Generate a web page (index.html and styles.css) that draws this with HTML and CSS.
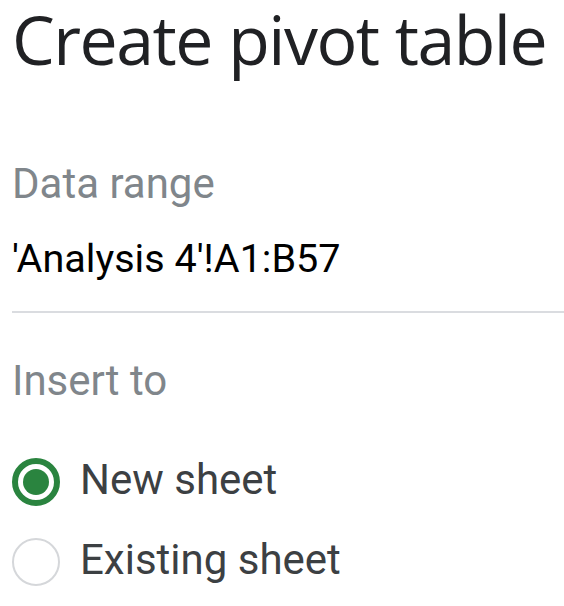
FILE: index.html
```html
<!DOCTYPE html>
<html>
<head>
<meta charset="utf-8">
<link rel="stylesheet" href="styles.css">
</head>
<body>
<div class="dialog">
  <h1 class="title">Create pivot table</h1>
  <div class="label label-range">Data range</div>
  <div class="range-value">'Analysis 4'!A1:B57</div>
  <div class="divider"></div>
  <div class="label label-insert">Insert to</div>
  <div class="options">
    <div class="option">
      <span class="radio radio-checked"><span class="dot"></span></span>
      <span class="option-text">New sheet</span>
    </div>
    <div class="option">
      <span class="radio"></span>
      <span class="option-text">Existing sheet</span>
    </div>
  </div>
</div>
</body>
</html>
```
FILE: styles.css
```css
html, body {
  margin: 0;
  padding: 0;
  background: #ffffff;
}
.dialog {
  padding-left: 12px;
  display: flex;
  flex-direction: column;
  font-family: Roboto, "Liberation Sans", sans-serif;
}
.title {
  margin: 0;
  padding-top: 5px;
  font-family: "Open Sans", sans-serif;
  font-weight: 400;
  font-size: 68px;
  line-height: 68px;
  letter-spacing: -1.5px;
  color: #202124;
  white-space: nowrap;
}
.label {
  font-size: 42px;
  line-height: 42px;
  color: #80868b;
}
.label-range {
  margin-top: 90px;
}
.range-value {
  margin-top: 34px;
  font-size: 39.6px;
  line-height: 40px;
  color: #000000;
}
.divider {
  margin-top: 32px;
  height: 2px;
  background: #dadce0;
}
.label-insert {
  margin-top: 47px;
}
.options {
  margin-top: 56px;
  display: flex;
  flex-direction: column;
  gap: 32px;
}
.option {
  display: flex;
  align-items: center;
  gap: 20px;
  height: 48px;
}
.radio {
  box-sizing: border-box;
  width: 48px;
  height: 48px;
  border-radius: 50%;
  border: 2px solid #d5d7da;
  display: flex;
  align-items: center;
  justify-content: center;
  flex: none;
}
.radio-checked {
  border: 6px solid #2a843f;
}
.dot {
  width: 26px;
  height: 26px;
  border-radius: 50%;
  background: #2a843f;
}
.option-text {
  font-size: 42px;
  line-height: 42px;
  padding-bottom: 5px;
  color: #3c4043;
}
```
